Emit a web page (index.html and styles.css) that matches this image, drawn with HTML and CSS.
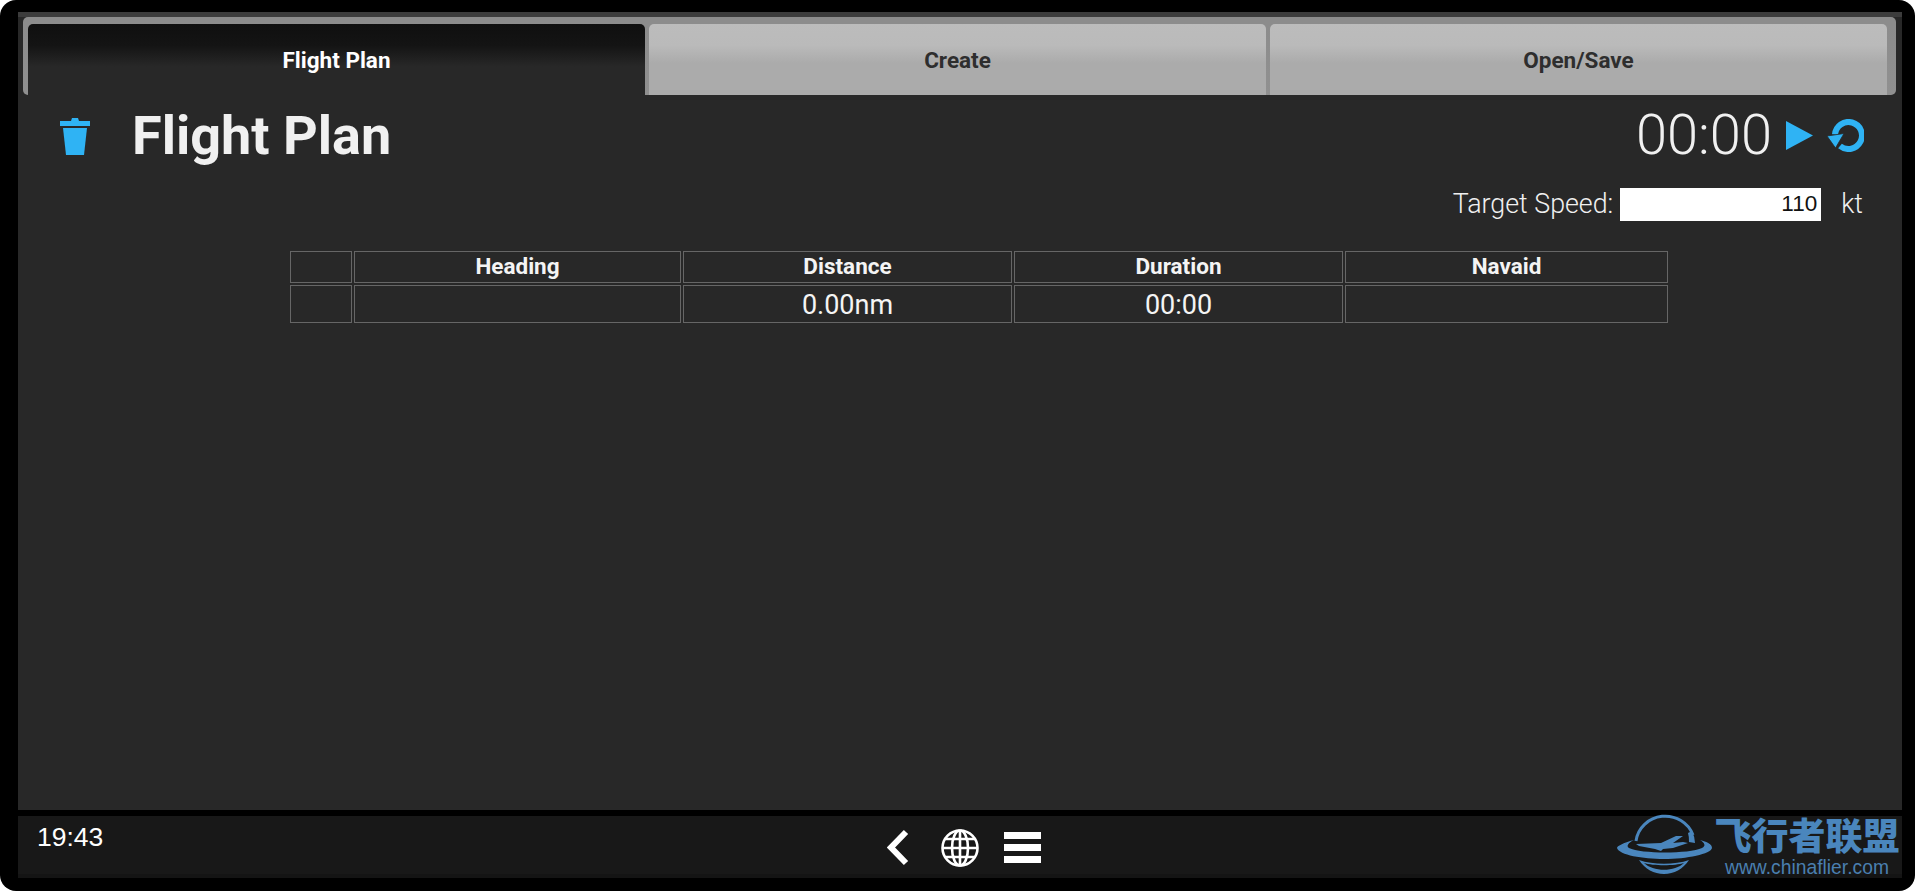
FILE: index.html
```html
<!DOCTYPE html>
<html lang="en">
<head>
<meta charset="utf-8">
<title>Flight Plan</title>
<link rel="stylesheet" href="styles.css">
</head>
<body>
<div class="screen">
  <main class="panel">
    <nav class="tabs">
      <div class="tab-strip">
        <div class="tab tab-active">Flight Plan</div>
        <div class="tab">Create</div>
        <div class="tab">Open/Save</div>
      </div>
    </nav>
    <section class="content">
      <header class="title-row">
        <svg class="icon-trash" viewBox="0 0 30 37" aria-hidden="true">
          <path d="M11 3 L12 0 H18 L19 3 H30 V8 H0 V3 Z" fill="#2fb3f4"/>
          <path d="M3 10 H27 L24 37 H6 Z" fill="#2fb3f4"/>
        </svg>
        <h1 class="title">Flight Plan</h1>
        <div class="timer">00:00</div>
        <svg class="icon-play" viewBox="0 0 27 29" aria-hidden="true"><path d="M0 0 L27 14.5 L0 29 Z" fill="#2fb3f4"/></svg>
        <svg class="icon-reset" viewBox="0 0 37 33" aria-hidden="true">
          <path d="M8 15.5 A13.5 13.5 0 1 1 13 27" fill="none" stroke="#2fb3f4" stroke-width="6"/>
          <path d="M0 17 L17 14.5 L8.5 29 Z" fill="#2fb3f4" stroke="#282828" stroke-width="0.8"/>
        </svg>
      </header>
      <div class="speed-row">
        <label class="speed-label">Target Speed:</label>
        <div class="speed-input">110</div>
        <span class="speed-unit">kt</span>
      </div>
      <table class="plan">
        <colgroup>
          <col class="col-a"><col class="col-b"><col class="col-c"><col class="col-d"><col class="col-e">
        </colgroup>
        <thead>
          <tr><th></th><th>Heading</th><th>Distance</th><th>Duration</th><th>Navaid</th></tr>
        </thead>
        <tbody>
          <tr><td></td><td></td><td>0.00nm</td><td>00:00</td><td></td></tr>
        </tbody>
      </table>
    </section>
    <footer class="bar">
      <div class="clock">19:43</div>
      <div class="nav-icons">
        <svg class="icon-back" viewBox="0 0 22 37" aria-hidden="true"><path d="M19 3 L4 18.5 L19 34" fill="none" stroke="#fff" stroke-width="6"/></svg>
        <svg class="icon-globe" viewBox="0 0 38 38" aria-hidden="true">
          <g fill="none" stroke="#fff" stroke-width="2.6">
            <circle cx="19" cy="19" r="17.5"/>
            <ellipse cx="19" cy="19" rx="8" ry="17.5"/>
            <path d="M19 1.5 V36.5 M1.5 19 H36.5 M4.5 10 H33.5 M4.5 28 H33.5"/>
          </g>
        </svg>
        <svg class="icon-menu" viewBox="0 0 37 31" aria-hidden="true">
          <rect width="37" height="7" fill="#fff"/><rect y="12" width="37" height="7" fill="#fff"/><rect y="24" width="37" height="7" fill="#fff"/>
        </svg>
      </div>
      <div class="logo">
        <svg class="logo-mark" viewBox="0 0 96 62" aria-hidden="true">
          <path d="M19 28 A29.5 28.5 0 0 1 76 22" fill="none" stroke="#4a86bd" stroke-width="3"/>
          <path d="M75 18 A30 30 0 0 1 78 30 L72 29 A26 26 0 0 0 71 20 Z" fill="#4a86bd"/>
          <path d="M22 47 C36 52 58 52 72 47 C66 56 57 61 47 61 C37 61 28 56 22 47 Z M27 50 C36 59 58 59 67 50 C58 53 36 53 27 50 Z" fill="#4a86bd" fill-rule="evenodd"/>
          <path d="M17 27 C6 30 0 33 0 35 C2 42 26 46 47 46 C70 46 94 41 95 35 C95 31 90 29 83 27 C88 30 89 33 85 35 C72 41 24 41 12 35 C9 33 11 30 17 27 Z" fill="#4a86bd"/>
          <path d="M19 31 L44 30 L59 23 L66 23 L56 30 L66 29 L71 30 L56 35 L46 36 L44 38 L38 36 L22 33 Z" fill="#4a86bd"/>
        </svg>
        <div class="logo-text">
          <div class="logo-cn">飞行者联盟</div>
          <div class="logo-url">www.chinaflier.com</div>
        </div>
      </div>
    </footer>
  </main>
</div>
</body>
</html>
```
FILE: styles.css
```css
* { box-sizing: border-box; }
html { background: #fff; }
html, body { margin: 0; height: 891px; overflow: hidden; }
body { font-family: Roboto, "Liberation Sans", sans-serif; }
.screen {
  height: 891px;
  background: #000;
  border-radius: 16px;
  padding: 12px 13px 13px 18px;
}
.panel {
  height: 866px;
  display: flex;
  flex-direction: column;
  background: #000;
}
.tabs {
  height: 83px;
  padding: 5px 6px 0 5px;
  background: linear-gradient(#3c3c3c 0 5px, #282828 5px);
}
.tab-strip {
  height: 78px;
  display: flex;
  gap: 4px;
  padding: 7px 9px 0 5px;
  border-radius: 5px;
  background: linear-gradient(#8c8c8c, #8c8c8c 10%, #909090);
}
.tab {
  flex: 1;
  border-radius: 5px 5px 0 0;
  display: flex;
  align-items: center;
  justify-content: center;
  font-size: 22.5px;
  font-weight: 700;
  color: #2e2e2e;
  background: linear-gradient(#bcbcbc, #bababa 30%, #ababab 55%, #ababab);
}
.tab-active {
  color: #fff;
  background: linear-gradient(#0f0f0f, #141414 30%, #282828 60%, #282828);
}
.content {
  height: 715px;
  background: #282828;
  color: #eee;
}
.title-row {
  display: flex;
  align-items: center;
  height: 80px;
  padding: 0 38px 0 42px;
}
.icon-trash { width: 30px; height: 37px; margin-top: 2px; flex: none; }
.title {
  margin: 0 0 0 42px;
  font-size: 54px;
  font-weight: 700;
  color: #f0f0f0;
  flex: 1;
}
.timer { font-size: 56px; font-weight: 300; color: #f0f0f0; }
.icon-play { width: 27px; height: 29px; margin-left: 14px; flex: none; }
.icon-reset { width: 37px; height: 33px; margin-left: 14px; flex: none; }
.speed-row {
  display: flex;
  align-items: center;
  justify-content: flex-end;
  height: 33px;
  margin-top: 13px;
  padding-right: 39px;
  font-size: 26.8px;
  font-weight: 300;
  color: #f0f0f0;
}
.speed-label { margin-top: -2px; }
.speed-input {
  width: 201px;
  height: 33px;
  margin-left: 7px;
  padding: 1px 4px 0 0;
  background: #fff;
  color: #111;
  font-family: "Liberation Sans", sans-serif;
  font-size: 22.5px;
  font-weight: 400;
  line-height: 30px;
  text-align: right;
}
.speed-unit { margin-left: 20px; margin-top: -2px; }
.plan {
  width: 1382px;
  table-layout: fixed;
  border-collapse: separate;
  border-spacing: 2px;
  margin: 28px 0 0 270px;
  color: #f4f4f4;
}
.col-a { width: 62px; }
.col-b { width: 327px; }
.col-c { width: 329px; }
.col-d { width: 329px; }
.col-e { width: 323px; }
.plan th, .plan td { border: 1px solid #666; padding: 0; text-align: center; }
.plan th { height: 32px; padding-bottom: 2px; font-size: 22.5px; font-weight: 700; }
.plan td { height: 38px; padding-top: 2px; font-size: 27px; font-weight: 400; }
.bar {
  position: relative;
  height: 62px;
  margin-top: 6px;
  display: flex;
  background: #181818;
  color: #fff;
  border-bottom: 4px solid #141414;
}
.clock {
  width: 869px;
  padding: 6px 0 0 19px;
  font-family: "Liberation Sans", sans-serif;
  font-size: 26.5px;
  line-height: 30px;
}
.nav-icons { display: flex; align-items: center; height: 63px; }
.icon-back { width: 22px; height: 37px; flex: none; }
.icon-globe { width: 38px; height: 38px; margin-left: 32px; flex: none; }
.icon-menu { width: 37px; height: 31px; margin-left: 25px; flex: none; }
.logo {
  position: absolute;
  left: 1599px;
  top: -3px;
  display: flex;
  width: 285px;
  height: 62px;
}
.logo-mark { width: 96px; height: 62px; flex: none; }
.logo-text { display: flex; flex-direction: column; align-items: center; flex: none; width: 188px; color: #4a86bd; }
.logo-cn {
  font-family: "Noto Sans CJK SC", sans-serif;
  font-weight: 900;
  font-size: 37px;
  line-height: 42px;
  white-space: nowrap;
}
.logo-url {
  margin-top: 5px;
  font-family: "Liberation Sans", sans-serif;
  font-size: 19.3px;
  line-height: 16px;
  white-space: nowrap;
  color: #4a7fb0;
}
```
